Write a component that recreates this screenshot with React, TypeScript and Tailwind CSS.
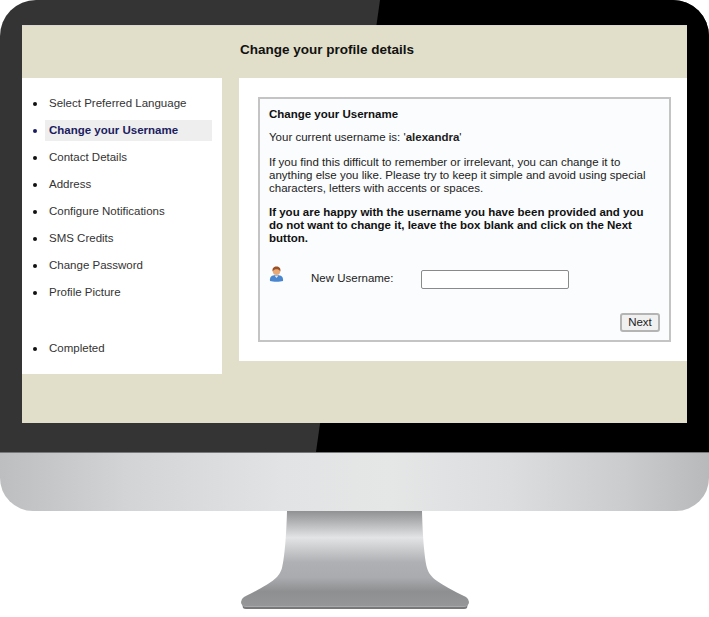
const steps = [
  'Select Preferred Language',
  'Change your Username',
  'Contact Details',
  'Address',
  'Configure Notifications',
  'SMS Credits',
  'Change Password',
  'Profile Picture',
];

function SideItem({ label, active }: { label: string; active?: boolean }) {
  return (
    <li className="flex h-[27px] items-center">
      <span className={active ? 'ml-[11px] h-[4px] w-[4px] rounded-full bg-[#1c1c60]' : 'ml-[11px] h-[4px] w-[4px] rounded-full bg-[#111]'} />
      <span
        className={
          active
            ? 'ml-[8px] flex h-[21px] w-[167px] items-center bg-[#eeeeee] pl-[4px] font-bold text-[#1c1c60]'
            : 'ml-[12px] text-[#333]'
        }
      >
        {label}
      </span>
    </li>
  );
}

function UserIcon() {
  return (
    <svg width="15" height="16" viewBox="0 0 15 16" className="shrink-0">
      <path d="M1 15c-.6-4 1.500-6 6.500-6s7 2 6.500 6c-3 1-10 1-13 0z" fill="#4a86cf" />
      <path d="M5.500 9.500l2 2.500 2-2.500z" fill="#dfe9f5" />
      <circle cx="7.500" cy="5.500" r="3.600" fill="#e8a878" />
      <path d="M3.600 5.500C3 2 5 .6 7.500 .6s4.500 1.400 3.900 4.900C10.500 3.600 9 3.200 7.500 3.200S4.500 3.600 3.600 5.500z" fill="#9a4f24" />
    </svg>
  );
}

export default function App() {
  return (
    <div className="h-[617px] w-[709px] overflow-hidden bg-white font-['Liberation_Sans',Arial,sans-serif] text-[11.5px]">
      {/* bezel */}
      <div className="relative h-[452px] overflow-hidden rounded-t-[36px] bg-[#343434] px-[22px] pt-[25px]">
        <svg className="absolute inset-0" width="709" height="452" viewBox="0 0 709 452">
          <path d="M380 0H709V452H316z" fill="#000" />
        </svg>

        <div className="relative h-[398px] border-t border-[#d8d8d0] bg-[#e1dfc9]">
          <div className="flex h-[52px] items-center justify-center pb-[3px] pr-[55px] text-[13.5px] font-bold text-[#111]">
            Change your profile details
          </div>

          <div className="flex items-start gap-[17px]">
            <div className="h-[296px] w-[200px] bg-white pt-[12px]">
              <ul>
                {steps.map((label) => (
                  <SideItem key={label} label={label} active={label === 'Change your Username'} />
                ))}
              </ul>
              <ul className="mt-[29px]">
                <SideItem label="Completed" />
              </ul>
            </div>

            <div className="h-[283px] w-[448px] bg-white pl-[19px] pt-[19px]">
              <div className="h-[245px] w-[413px] border-2 border-[#c4c4c4] bg-[#fafcfd] px-[9px] pt-[9px] leading-[13px] text-[#222]">
                <p className="font-bold text-[#111]">Change your Username</p>
                <p className="mt-[10px]">
                  Your current username is: '<b>alexandra</b>'
                </p>
                <p className="mt-[12px]">
                  If you find this difficult to remember or irrelevant, you can change it to anything else you like. Please try to keep it simple and avoid using special characters, letters with accents or spaces.
                </p>
                <p className="mt-[11px] font-bold text-[#111]">
                  If you are happy with the username you have been provided and you do not want to change it, leave the box blank and click on the Next button.
                </p>

                <div className="mt-[21px] flex items-start">
                  <UserIcon />
                  <span className="ml-[27px] mt-[6px] w-[110px]">New Username:</span>
                  <div className="mt-[4px] h-[19px] w-[148px] rounded-[2px] border border-[#8a8a8a] bg-white" />
                </div>

                <div className="mt-[24px] flex justify-end">
                  <button className="h-[19px] w-[40px] rounded-[3px] border-2 border-[#b4b4b4] bg-[#f0f0f0] text-[11.5px] leading-none text-[#222]">
                    Next
                  </button>
                </div>
              </div>
            </div>
          </div>
        </div>
      </div>

      {/* chin */}
      <div className="h-[59px] rounded-b-[33px] border-t border-[#77787a] bg-[linear-gradient(90deg,#bdbec0_0%,#d3d4d6_18%,#e2e3e4_40%,#e5e6e6_55%,#dcdddf_72%,#cbccce_88%,#b8b9bb_100%)]" />

      {/* stand */}
      <svg width="709" height="100" viewBox="0 511 709 100" className="block">
        <defs>
          <linearGradient id="stand" x1="0" y1="511" x2="0" y2="606" gradientUnits="userSpaceOnUse">
            <stop offset="0" stopColor="#909193" />
            <stop offset="0.28" stopColor="#e3e4e5" />
            <stop offset="0.54" stopColor="#aeb0b3" />
            <stop offset="0.7" stopColor="#aaabae" />
            <stop offset="0.85" stopColor="#8e8f91" />
            <stop offset="1" stopColor="#959698" />
          </linearGradient>
        </defs>
        <path d="M242 603H468L467 608Q466 609 464 609H246Q244 609 243 608Z" fill="#77787a" />
        <path d="M242 603H468L467 606Q466 607 464 607H246Q244 607 243 606Z" fill="#a9a9ab" />
        <path
          d="M287 511H422C422.500 530 424 556 427 568C430 578 438 583 466 597Q469 599 469 602Q469 606 464 606H246Q241 606 241 602Q241 599 244 597C272 583 279 578 282 568C285 556 286.500 530 287 511Z"
          fill="url(#stand)"
        />
      </svg>
    </div>
  );
}
